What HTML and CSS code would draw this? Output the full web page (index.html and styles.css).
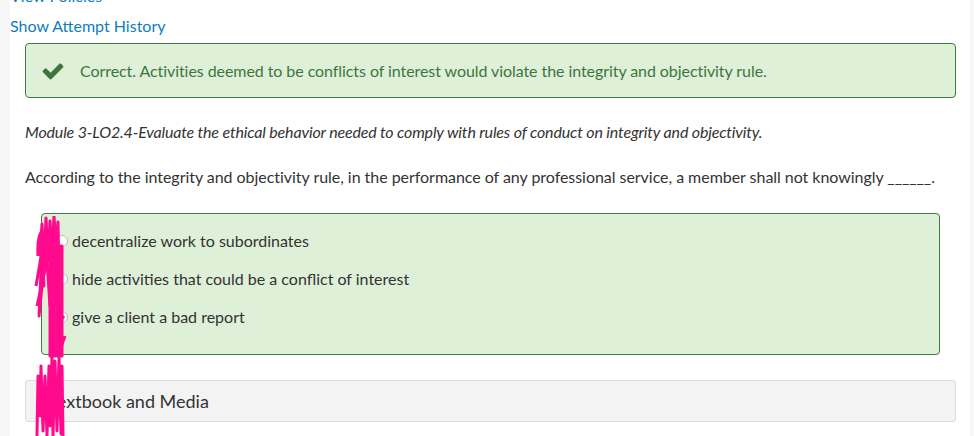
FILE: index.html
```html
<!DOCTYPE html>
<html lang="en">
<head>
<meta charset="utf-8">
<title>Question</title>
<link rel="stylesheet" href="styles.css">
</head>
<body>
<div class="page">
  <a class="link policies" href="#">View Policies</a>
  <a class="link history" href="#">Show Attempt History</a>

  <div class="feedback">
    <svg class="check" viewBox="0 0 1792 1792" aria-hidden="true"><path d="M1671 566q0 40-28 68l-724 724-136 136q-28 28-68 28t-68-28l-136-136-362-362q-28-28-28-68t28-68l136-136q28-28 68-28t68 28l294 295 656-657q28-28 68-28t68 28l136 136q28 28 28 68z"/></svg>
    <span>Correct. Activities deemed to be conflicts of interest would violate the integrity and objectivity rule.</span>
  </div>

  <p class="module">Module 3-LO2.4-Evaluate the ethical behavior needed to comply with rules of conduct on integrity and objectivity.</p>

  <p class="question">According to the integrity and objectivity rule, in the performance of any professional service, a member shall not knowingly ______.</p>

  <div class="options">
    <label class="option"><span class="radio"></span><span>decentralize work to subordinates</span></label>
    <label class="option"><span class="radio"></span><span>hide activities that could be a conflict of interest</span></label>
    <label class="option"><span class="radio"></span><span>give a client a bad report</span></label>
  </div>

  <div class="ebook">eTextbook and Media</div>

  <svg class="scribble" viewBox="0 0 40 220" aria-hidden="true">
    <path d="M6 40 L8 8 L10 50 L12 2 L14 45 L16 5 L18 40 L20 0 L22 30 L24 6 L25 60 L6 25 L10 70 L8 35 L5 100 L12 30 L16 90 L22 40 L25 110 L18 60 L20 120" />
    <path d="M4 40 Q3 20 8 15 M4 60 L10 20 M3 90 L14 40 M2 70 L9 30" />
    <rect x="16" y="30" width="12" height="110" />
    <path d="M22 110 L30 100 M24 140 L31 120" />
    <path d="M3 220 L4 160 L6 200 L7 150 L9 215 L11 160 L13 220 L15 150 L16 210 L18 140 L19 220 L21 145 L23 215 L25 142 L27 218 L28 150 L29 220" />
  </svg>
</div>
</body>
</html>
```

FILE: styles.css
```css
html, body {
  margin: 0;
  padding: 0;
}

body {
  background: #f7f7f7;
  font-family: Lato, "Open Sans", "Liberation Sans", sans-serif;
  color: #333;
  height: 436px;
  overflow: hidden;
}

.page {
  position: relative;
  margin-left: 10px;
  width: 960px;
  height: 436px;
  background: #fff;
  display: flex;
  flex-direction: column;
  align-items: flex-start;
}

.link {
  color: #0f7dbf;
  text-decoration: none;
  font-size: 16px;
  line-height: 22px;
}

.policies {
  margin-top: -15px;
}

.history {
  margin-top: 8px;
}

.feedback {
  box-sizing: border-box;
  margin: 6px 0 0 15px;
  width: 931px;
  height: 55px;
  border: 1px solid #3e7b3e;
  border-radius: 4px;
  background: #dff0d8;
  color: #3c763d;
  font-size: 16px;
  letter-spacing: -0.07px;
  display: flex;
  align-items: center;
  padding-left: 15px;
  gap: 15px;
}

.check {
  width: 24px;
  height: 24px;
  fill: #3c763d;
  flex: none;
}

.module {
  margin: 23px 0 0 15px;
  font-size: 16px;
  font-style: italic;
  line-height: 22px;
  letter-spacing: -0.16px;
}

.question {
  margin: 23px 0 0 15px;
  font-size: 16px;
  line-height: 22px;
  letter-spacing: -0.04px;
}

.options {
  box-sizing: border-box;
  margin: 25px 0 0 31px;
  width: 899px;
  height: 142px;
  border: 1px solid #3e7b3e;
  border-radius: 4px;
  background: #dff0d8;
  padding: 16px 0 0 14px;
  display: flex;
  flex-direction: column;
  gap: 16px;
}

.option {
  display: flex;
  align-items: center;
  gap: 4px;
  font-size: 16px;
  line-height: 22px;
  color: #333;
}

.radio {
  width: 12px;
  height: 12px;
  border-radius: 50%;
  border: 1px solid #bbb;
  background: #fff;
  box-sizing: border-box;
}

.ebook {
  box-sizing: border-box;
  margin: 25px 0 0 15px;
  width: 931px;
  height: 42px;
  border: 1px solid #ddd;
  border-radius: 3px;
  background: #f3f3f3;
  font-size: 18px;
  display: flex;
  align-items: center;
  padding-left: 15px;
}

.scribble {
  position: absolute;
  left: 24px;
  top: 216px;
  width: 40px;
  height: 220px;
  fill: #ff0a8c;
  stroke: #ff0a8c;
  stroke-width: 3;
  stroke-linejoin: round;
}

.scribble path {
  fill: none;
}
```
